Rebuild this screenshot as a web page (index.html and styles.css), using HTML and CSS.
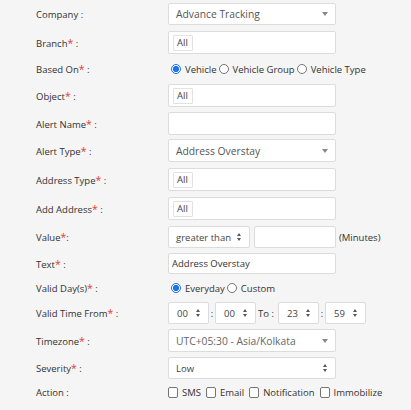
FILE: index.html
```html
<!DOCTYPE html>
<html>
<head>
<meta charset="utf-8">
<link rel="stylesheet" href="styles.css">
</head>
<body>
<div class="form">
  <div class="row r1">
    <div class="label">Company :</div>
    <div class="ctrl select"><span class="val">Advance Tracking</span><span class="caret"></span></div>
  </div>
  <div class="row r2">
    <div class="label">Branch<span class="req">*</span> :</div>
    <div class="ctrl multi"><span class="tag">All</span></div>
  </div>
  <div class="row radio-row r3">
    <div class="label">Based On<span class="req">*</span> :</div>
    <div class="opts">
      <span class="radio on"></span><span class="opt">Vehicle</span>
      <span class="radio"></span><span class="opt">Vehicle Group</span>
      <span class="radio"></span><span class="opt">Vehicle Type</span>
    </div>
  </div>
  <div class="row r4">
    <div class="label">Object<span class="req">*</span> :</div>
    <div class="ctrl multi"><span class="tag">All</span></div>
  </div>
  <div class="row r5">
    <div class="label">Alert Name<span class="req">*</span> :</div>
    <div class="ctrl text"></div>
  </div>
  <div class="row r6">
    <div class="label">Alert Type<span class="req">*</span> :</div>
    <div class="ctrl select"><span class="val">Address Overstay</span><span class="caret"></span></div>
  </div>
  <div class="row r7">
    <div class="label">Address Type<span class="req">*</span> :</div>
    <div class="ctrl multi"><span class="tag">All</span></div>
  </div>
  <div class="row r8">
    <div class="label">Add Address<span class="req">*</span> :</div>
    <div class="ctrl multi"><span class="tag">All</span></div>
  </div>
  <div class="row r9">
    <div class="label">Value<span class="req">*</span>:</div>
    <div class="group">
      <div class="ctrl native w-cmp"><span class="val">greater than</span><span class="spin"></span></div>
      <div class="ctrl text w-num"></div>
      <span class="unit">(Minutes)</span>
    </div>
  </div>
  <div class="row r10">
    <div class="label">Text<span class="req">*</span> :</div>
    <div class="ctrl text"><span class="tval">Address Overstay</span></div>
  </div>
  <div class="row radio-row r11">
    <div class="label">Valid Day(s)<span class="req">*</span> :</div>
    <div class="opts">
      <span class="radio on"></span><span class="opt">Everyday</span>
      <span class="radio"></span><span class="opt">Custom</span>
    </div>
  </div>
  <div class="row r12">
    <div class="label">Valid Time From<span class="req">*</span> :</div>
    <div class="group">
      <div class="ctrl native w-t"><span class="val">00</span><span class="spin"></span></div>
      <span class="sep">:</span>
      <div class="ctrl native w-t"><span class="val">00</span><span class="spin"></span></div>
      <span class="to">To :</span>
      <div class="ctrl native w-t"><span class="val">23</span><span class="spin"></span></div>
      <span class="sep">:</span>
      <div class="ctrl native w-t"><span class="val">59</span><span class="spin"></span></div>
    </div>
  </div>
  <div class="row r13">
    <div class="label">Timezone<span class="req">*</span> :</div>
    <div class="ctrl select"><span class="val light">UTC+05:30 - Asia/Kolkata</span><span class="caret"></span></div>
  </div>
  <div class="row r14">
    <div class="label">Severity<span class="req">*</span> :</div>
    <div class="ctrl native"><span class="val">Low</span><span class="spin"></span></div>
  </div>
  <div class="row radio-row r15">
    <div class="label">Action :</div>
    <div class="opts">
      <span class="check"></span><span class="opt">SMS</span>
      <span class="check"></span><span class="opt">Email</span>
      <span class="check"></span><span class="opt">Notification</span>
      <span class="check"></span><span class="opt">Immobilize</span>
    </div>
  </div>
</div>
</body>
</html>
```
FILE: styles.css
```css
html, body {
  margin: 0;
  padding: 0;
  background: #f5f5f5;
}
body {
  font-family: "Open Sans", "Liberation Sans", sans-serif;
  font-size: 9.5px;
  color: #333;
}
.form {
  padding: 3px 0 0 36px;
  display: flex;
  flex-direction: column;
}
.row {
  display: flex;
  align-items: center;
  height: 23px;
  margin-bottom: 5px;
}
.r1 { height: 22px; margin-bottom: 6px; }
.r2 { margin-bottom: 0; }
.r3 { height: 30px; margin-bottom: 0; }
.r5 { margin-bottom: 4px; }
.r6, .r7, .r8 { margin-bottom: 6px; }
.r9 { height: 22px; margin-bottom: 5px; }
.r10 { height: 21px; margin-bottom: 0; }
.r11 { height: 28px; margin-bottom: 0; }
.r12 { height: 22px; margin-bottom: 5px; }
.r13 { margin-bottom: 5px; }
.r14 { height: 22px; margin-bottom: 0; }
.r15 { height: 26px; margin-bottom: 0; }

.label {
  width: 132px;
  flex: none;
  white-space: nowrap;
}
.req { color: #e53935; font-size: 10.5px; }

.ctrl {
  box-sizing: border-box;
  width: 168px;
  height: 100%;
  background: #fff;
  border: 1px solid #dcdcdc;
  border-radius: 2px;
  display: flex;
  align-items: center;
  position: relative;
  color: #444;
}
.select .val, .native .val { padding-left: 7px; }
.select .val { font-size: 10.3px; color: #555; }
.val.light { color: #666; }
.caret {
  position: absolute;
  right: 7px;
  top: 50%;
  margin-top: -2px;
  width: 0;
  height: 0;
  border-left: 3px solid transparent;
  border-right: 3px solid transparent;
  border-top: 4px solid #888;
}
.spin {
  position: absolute;
  right: 7px;
  top: 50%;
  margin-top: -4px;
  width: 5px;
  height: 8px;
}
.spin::before, .spin::after {
  content: "";
  position: absolute;
  left: 0;
  width: 0;
  height: 0;
  border-left: 2.5px solid transparent;
  border-right: 2.5px solid transparent;
}
.spin::before { top: 0; border-bottom: 3px solid #555; }
.spin::after { bottom: 0; border-top: 3px solid #555; }

.multi { padding-left: 4px; }
.tag {
  box-sizing: border-box;
  height: 16px;
  width: 20px;
  padding: 0 0 0 3px;
  border: 1px solid #e2e2e2;
  border-radius: 1px;
  display: flex;
  align-items: center;
  color: #444;
}
.tval { padding-left: 3px; color: #333; }

.group {
  display: flex;
  align-items: center;
  height: 100%;
}
.w-cmp { width: 82px; }
.w-num { width: 82px; margin-left: 4px; }
.unit { margin-left: 3px; color: #333; }
.w-t { width: 41px; }
.w-t .val { padding-left: 8px; }
.sep { width: 6px; text-align: center; }
.to { width: 20px; margin-left: 2px; white-space: nowrap; }

.opts {
  display: flex;
  align-items: center;
  margin-left: 3px;
}
.opt { margin: 0 2px 0 4px; white-space: nowrap; }
.radio {
  box-sizing: border-box;
  width: 10px;
  height: 10px;
  border-radius: 50%;
  border: 1px solid #767676;
  background: #fff;
  flex: none;
}
.radio.on {
  border: 1px solid #1a73e8;
  background: radial-gradient(circle, #1a73e8 0 2.8px, #fff 3.3px);
}
.r15 .opts { margin-left: 0; }
.check {
  box-sizing: border-box;
  width: 10px;
  height: 11px;
  border-radius: 2px;
  border: 1px solid #767676;
  background: #fff;
  flex: none;
}
.r15 .opt { margin: 0 5px 0 4px; }
```
